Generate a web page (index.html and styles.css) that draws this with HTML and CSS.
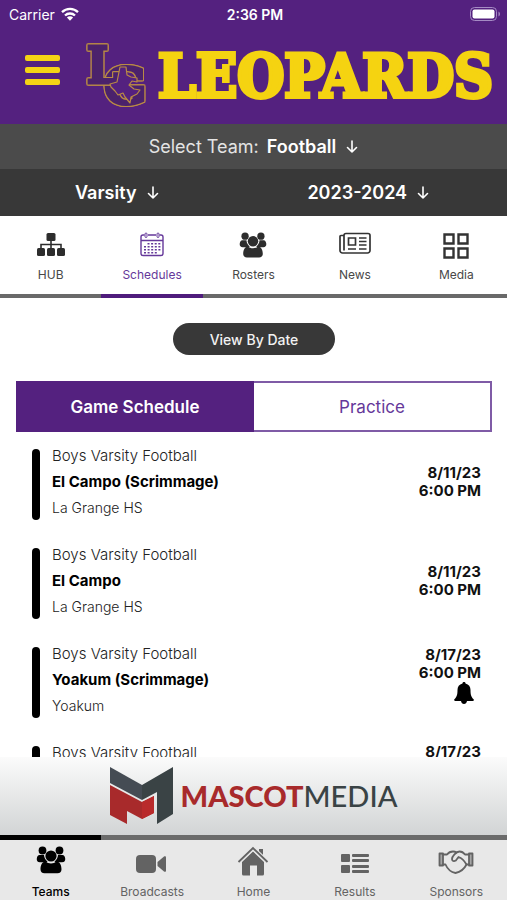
FILE: index.html
```html
<!DOCTYPE html>
<html lang="en">
<head>
<meta charset="utf-8">
<meta name="viewport" content="width=device-width, initial-scale=1">
<title>Leopards Football Schedule</title>
<link rel="stylesheet" href="styles.css">
</head>
<body>
<svg class="defs" aria-hidden="true">
  <symbol id="down" viewBox="0 0 12 14"><path d="M6 1v11M1.500 7.500 6 12l4.500-4.500" fill="none" stroke="currentColor" stroke-width="1.600" stroke-linecap="round" stroke-linejoin="round"/></symbol>
  <symbol id="people" viewBox="0 0 30 28">
    <g fill="currentColor">
      <circle cx="6.500" cy="4.500" r="3.900"/><circle cx="23.500" cy="4.500" r="3.900"/>
      <path d="M3.500 9h4.500c.2 3 1.500 5 3.500 6.500l-1 .8H4C1.500 16.300.5 14.500.8 12.500 1.100 10.500 2 9 3.500 9Zm23 0H22c-.2 3-1.500 5-3.500 6.500l1 .8H26c2.500 0 3.500-1.800 3.200-3.800C28.900 10.500 28 9 26.500 9Z"/>
      <circle cx="15" cy="10" r="5.600"/>
      <path d="M9.500 15.500c1.500 1.200 3.500 1.900 5.500 1.900s4-.7 5.500-1.900c3.500.3 5 4 5 7.800 0 2.700-1.500 4-4 4h-13c-2.500 0-4-1.300-4-4 0-3.800 1.500-7.500 5-7.800Z"/>
    </g>
  </symbol>
</svg>

<header class="top">
  <div class="status">
    <span class="carrier">Carrier
      <svg width="18" height="14" viewBox="0 0 18 14" aria-hidden="true"><g fill="none" stroke="#fff" stroke-width="2.300"><path d="M1 5.200a11.500 11.500 0 0 1 16 0"/><path d="M4 8.500a7.200 7.200 0 0 1 10 0"/></g><path d="M9 13.800 5.900 10.600a4.400 4.400 0 0 1 6.200 0Z" fill="#fff"/></svg>
    </span>
    <time class="clock">2:36 PM</time>
    <svg class="battery" width="31" height="14" viewBox="0 0 31 14" aria-hidden="true"><rect x=".5" y=".5" width="26" height="13" rx="4" fill="none" stroke="#a58bc4"/><rect x="2.500" y="2.500" width="22" height="9" rx="2" fill="#fff"/><path d="M28.500 4.500c2 1 2 4 0 5Z" fill="#a58bc4"/></svg>
  </div>
  <div class="brand">
    <button class="menu" type="button" aria-label="Menu"><span></span><span></span><span></span></button>
    <svg class="monogram" width="66" height="66" viewBox="0 0 66 66" aria-hidden="true">
      <text x="18" y="61" class="mono wide">G</text>
      <text x="1" y="40" class="mono">L</text>
      <path fill="#54217f" stroke="#b98a45" stroke-width="1.200" stroke-linejoin="round" d="M34 24h6l1 8 4 2 6 1v4l-5-1-3 4 5 4 6 1-3 4-6 3-1 6-5-6-2-4-5 2-3-4-4-4-1-3 7-2Z"/>
    </svg>
    <span class="wordmark">LEOPARDS</span>
  </div>
</header>

<div class="filter team">
  <label for="team">Select Team:</label>
  <span class="pick"><select id="team"><option>Football</option></select><svg width="12" height="14"><use href="#down"/></svg></span>
</div>
<div class="filter split">
  <span class="pick"><select aria-label="Level"><option>Varsity</option></select><svg width="12" height="14"><use href="#down"/></svg></span>
  <span class="pick"><select aria-label="Season"><option>2023-2024</option></select><svg width="12" height="14"><use href="#down"/></svg></span>
</div>

<nav class="tabs" aria-label="Team sections">
  <a href="#hub"><svg width="28" height="28" viewBox="0 0 28 28" fill="#2d2d2d"><rect x="9.500" y="2" width="9" height="8" rx="1.500"/><rect x="0" y="17" width="8" height="8" rx="1.500"/><rect x="10" y="17" width="8" height="8" rx="1.500"/><rect x="20" y="17" width="8" height="8" rx="1.500"/><path d="M14 8v10M4 18v-4.500h20V18" fill="none" stroke="#2d2d2d" stroke-width="1.600"/></svg>HUB</a>
  <a href="#schedules" class="on" aria-current="page"><svg width="28" height="28" viewBox="0 0 28 28" fill="none" stroke="currentColor" stroke-width="1.400"><path d="M6.500 4H5a2 2 0 0 0-2 2v16.500a2 2 0 0 0 2 2h18a2 2 0 0 0 2-2V6a2 2 0 0 0-2-2h-1.500M10 4h8M3 9.500h22"/><rect x="7" y="2" width="2" height="4.500" rx="1" stroke-width="1"/><rect x="19" y="2" width="2" height="4.500" rx="1" stroke-width="1"/><path d="M9.500 12.700h13M6 15.700h16.500M6 18.700h16.500M6 21.700h13" stroke-width="1.600" stroke-dasharray="2 1.600"/></svg>Schedules</a>
  <a href="#rosters"><svg width="28" height="28" color="#2d2d2d"><use href="#people"/></svg>Rosters</a>
  <a href="#news"><svg width="32" height="28" viewBox="0 0 32 28" fill="none" stroke="#333" stroke-width="1.700"><path d="M5 19.500V4.500a2 2 0 0 1 2-2h22a2 2 0 0 1 2 2v15a2.500 2.500 0 0 1-2.500 2.500H3.500A2.500 2.500 0 0 1 1 19.500V5.500a1 1 0 0 1 1-1h3"/><path d="M9.500 7h7v7h-7ZM20 7h7.500M20 10.500h7.500M20 14h7.500M9 18h8M20 18h7.500"/></svg>News</a>
  <a href="#media"><svg width="28" height="28" viewBox="0 0 28 28" fill="none" stroke="#333" stroke-width="2.400"><path d="M2.500 3.500h9v9h-9ZM16.500 3.500h9v9h-9ZM2.500 17.500h9v9h-9ZM16.500 17.500h9v9h-9Z"/></svg>Media</a>
</nav>

<main class="content">
  <button class="pill" type="button">View By Date</button>
  <div class="segments">
    <button type="button" class="on" aria-pressed="true">Game Schedule</button>
    <button type="button" aria-pressed="false">Practice</button>
  </div>
  <ul class="games">
    <li>
      <div class="info"><p>Boys Varsity Football</p><h2>El Campo (Scrimmage)</h2><p class="place">La Grange HS</p></div>
      <div class="when"><span>8/11/23</span><span>6:00 PM</span></div>
    </li>
    <li>
      <div class="info"><p>Boys Varsity Football</p><h2>El Campo</h2><p class="place">La Grange HS</p></div>
      <div class="when"><span>8/11/23</span><span>6:00 PM</span></div>
    </li>
    <li>
      <div class="info"><p>Boys Varsity Football</p><h2>Yoakum (Scrimmage)</h2><p class="place">Yoakum</p></div>
      <div class="when"><span>8/17/23</span><span>6:00 PM</span>
        <button class="bell" type="button" aria-label="Notify me"><svg width="20" height="22" viewBox="0 0 20 22"><path d="M10 0c1 0 1.500.6 1.500 1.400 3.300.8 5 3.300 5 6.600 0 4.800.7 7 3.100 9.300.7.800.2 1.700-.8 1.700H1.200c-1 0-1.500-.9-.8-1.700C2.800 15 3.500 12.800 3.500 8c0-3.300 1.700-5.800 5-6.600C8.500.6 9 0 10 0ZM7 19h6c-.3 2-1.500 3-3 3s-2.700-1-3-3Z"/></svg></button>
      </div>
    </li>
    <li>
      <div class="info"><p>Boys Varsity Football</p></div>
      <div class="when"><span>8/17/23</span></div>
    </li>
  </ul>
</main>

<a class="sponsor" href="#sponsor" aria-label="Mascot Media">
  <svg width="64" height="58" viewBox="0 0 64 58" aria-hidden="true"><path d="M0 0 32 18 32 33 0 16Z" fill="#454c54"/><path d="M63 0 32 18V33L47 25V57L63 47Z" fill="#3a4345"/><path d="M0 18 32 35 44 29V46L32 52 17 44V57L0 48Z" fill="#a82a2b"/><path d="M32 35 44 29V46L32 52Z" fill="#b92a2b"/></svg>
  <span><b>MASCOT</b>MEDIA</span>
</a>

<nav class="dock" aria-label="Main">
  <a href="#teams" class="on" aria-current="page"><svg width="30" height="28"><use href="#people"/></svg>Teams</a>
  <a href="#broadcasts"><svg width="32" height="28" viewBox="0 0 32 28" fill="currentColor"><rect x="0" y="9" width="20" height="18" rx="4"/><path d="M21.500 16 28 10.500c1-.7 2-.3 2 .8v13.400c0 1.100-1 1.500-2 .8L21.500 20Z"/></svg>Broadcasts</a>
  <a href="#home"><svg width="32" height="30" viewBox="0 0 32 30" fill="currentColor"><path d="M22 3h4v8.500L22 7.500ZM16 5.500l11 10.500v12a1.500 1.500 0 0 1-1.500 1.500H20v-10h-7v10H6.500A1.500 1.500 0 0 1 5 28V16Z"/><path d="M1.500 16 16 2l14.500 14" fill="none" stroke="#e8e8e8" stroke-width="4"/><path d="M1.500 16 16 2l14.500 14" fill="none" stroke="currentColor" stroke-width="1.800"/></svg>Home</a>
  <a href="#results"><svg width="28" height="28" viewBox="0 0 28 28" fill="currentColor"><rect y="8" width="9" height="8" rx="1"/><rect y="19" width="9" height="8" rx="1"/><rect x="11" y="8" width="17" height="3" rx="1"/><rect x="11" y="13" width="17" height="3" rx="1"/><rect x="11" y="19" width="17" height="3" rx="1"/><rect x="11" y="24" width="17" height="3" rx="1"/></svg>Results</a>
  <a href="#sponsors"><svg width="36" height="28" viewBox="0 0 36 28" fill="none" stroke="currentColor" stroke-width="1.800" stroke-linejoin="round" stroke-linecap="round"><path d="M1.500 7.500H5v12H1.500ZM34.500 7.500H31v12h3.500Z" fill="currentColor" fill-opacity=".5"/><path d="M5 8.500h4c1.500-2 3.500-3 6-3 1.500 0 2.500.3 3.500 1M5 18.500h2.500c1.500 3.500 5 7.500 10 8.500 5-1 9-4.500 11-8.500H31"/><path d="M31 8.500h-4c-1.500-2-3.500-3-5.500-3-3.500 0-7.500 5-7.500 7.500 0 3 4 2.500 5 0l1.500-2c3 1 6 4 8 7.500"/></svg>Sponsors</a>
</nav>
</body>
</html>
```
FILE: styles.css
```css
* { box-sizing: border-box; }

body {
  margin: 0;
  height: 100vh;
  display: flex;
  flex-direction: column;
  overflow: hidden;
  background: #fff;
  color: #111;
  font-family: Inter, "Liberation Sans", sans-serif;
}

a { color: inherit; text-decoration: none; }
button { font: inherit; border: 0; padding: 0; cursor: pointer; }
svg { flex: none; display: block; }
.defs { position: absolute; width: 0; height: 0; }

.top { background: #54217f; color: #fff; }

.status {
  display: grid;
  grid-template-columns: 1fr auto 1fr;
  align-items: center;
  height: 28px;
  padding: 0 6px 0 9px;
  font-size: 14px;
}
.carrier { display: flex; align-items: center; gap: 6px; }
.clock { font-weight: 600; }
.battery { justify-self: end; }

.brand {
  display: flex;
  align-items: center;
  height: 96px;
  padding: 0 14px 0 25px;
}
.menu {
  display: grid;
  gap: 6px;
  width: 36px;
  margin-right: 26px;
  margin-bottom: 12px;
  background: none;
}
.menu span { height: 6px; border-radius: 2px; background: #f5d315; }
.monogram { margin-right: 6px; overflow: visible; }
.mono {
  font: bold 50px "DejaVu Serif Condensed", "DejaVu Serif", serif;
  fill: #4b226c;
  stroke: #4b226c;
  stroke-width: 3;
  filter: drop-shadow(1px 0 0 #b98a45) drop-shadow(-1px 0 0 #b98a45) drop-shadow(0 1px 0 #b98a45) drop-shadow(0 -1px 0 #b98a45);
}
.wide { font-family: "DejaVu Serif", serif; }
.wordmark {
  color: #f5d311;
  font: bold 60px/68px "DejaVu Serif Condensed", "DejaVu Serif", serif;
  -webkit-text-stroke: 4px #f5d311;
}

.filter {
  display: flex;
  align-items: center;
  justify-content: center;
  gap: 8px;
  color: #fff;
  font-size: 18px;
}
.team { height: 45px; background: #4b4b4b; }
.team label { color: #e4e4e4; }
.split {
  display: grid;
  grid-template-columns: 1fr 1fr;
  gap: 0;
  height: 47px;
  padding: 0 16px 0 0;
  background: #383838;
}
.split .pick:first-child { margin-right: 12px; }
.pick { display: flex; align-items: center; justify-content: center; gap: 10px; }
select {
  appearance: none;
  field-sizing: content;
  border: 0;
  padding: 0;
  background: none;
  color: #fff;
  font: inherit;
  font-weight: 600;
}

.tabs, .dock { display: grid; grid-template-columns: repeat(5, 1fr); }
.tabs a, .dock a {
  display: flex;
  flex-direction: column;
  align-items: center;
  font-size: 12px;
  line-height: 16px;
}
.tabs a {
  gap: 8px;
  height: 82px;
  padding-top: 15px;
  border-bottom: 4px solid #696969;
  color: #484848;
}
.tabs .on { border-color: #4f1c7c; color: #65389a; }

.content {
  flex: 1;
  min-height: 0;
  overflow: hidden;
  padding: 25px 15px 0 16px;
}
.pill {
  display: block;
  width: 162px;
  height: 32px;
  margin: 0 auto 26px;
  border-radius: 16px;
  background: #383838;
  color: #f2f2f2;
  font-size: 14px;
  font-weight: 500;
}
.segments {
  display: grid;
  grid-template-columns: 1fr 1fr;
  height: 51px;
  border: 2px solid #7f5ba6;
}
.segments button { background: #fff; color: #65389a; font-size: 17px; }
.segments .on { margin: -2px 0 -2px -2px; background: #54217f; color: #fff; font-weight: 600; }

.games { list-style: none; margin: 0; padding: 14px 11px 0 16px; }
.games li {
  display: flex;
  align-items: center;
  justify-content: space-between;
  height: 72px;
  margin-bottom: 27px;
}
.games li:last-child { align-items: flex-start; }
.games li:last-child .info { margin-top: -3px; }
.info {
  padding-left: 12px;
  position: relative;
  margin-left: 8px;
}
.info::before {
  content: "";
  position: absolute;
  top: 6px;
  left: -8px;
  width: 8px;
  height: 71px;
  border-radius: 4px;
  background: #000;
}
.info p, .info h2 { margin: 0; line-height: 26px; }
.info p { color: #222; font-size: 15px; font-weight: 300; }
.info h2 { font-size: 15px; font-weight: 700; color: #000; }
.info .place { font-size: 14px; }
.when {
  display: flex;
  flex-direction: column;
  align-items: flex-end;
  font-size: 15px;
  font-weight: 700;
  line-height: 18px;
}
.bell { margin: 0 7px 10px 0; background: none; }

.sponsor {
  display: flex;
  align-items: center;
  justify-content: center;
  gap: 7px;
  height: 78px;
  background: linear-gradient(#fbfbfb, #d2d4d5);
  color: #3a4345;
  font: 500 29px/40px Lato, sans-serif;
}
.sponsor b { color: #a82a2b; font-weight: 900; }

.dock { background: #e8e8e8; color: #636363; }
.dock a {
  justify-content: space-between;
  height: 65px;
  border-top: 5px solid #6b6b6b;
  padding: 6px 0 0;
}
.dock .on { border-color: #000; color: #000; font-weight: 500; }
```
